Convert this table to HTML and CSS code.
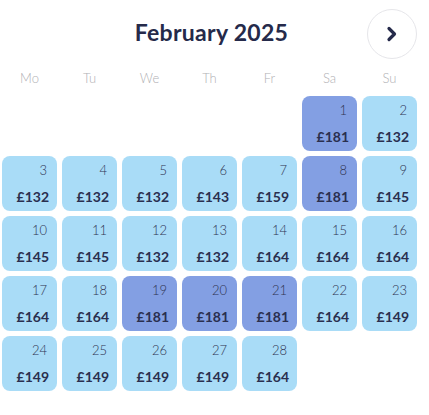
FILE: index.html
```html
<!DOCTYPE html>
<html lang="en">
<head>
<meta charset="utf-8">
<title>February 2025</title>
<link rel="stylesheet" href="styles.css">
</head>
<body>
<div class="cal">
  <div class="head">
    <span></span>
    <h1 class="title">February 2025</h1>
    <button class="next" aria-label="Next month">
      <svg width="12" height="16" viewBox="0 0 12 16"><path d="M3 2.5 L8.5 8 L3 13.5" fill="none" stroke="#252a4a" stroke-width="3.2" stroke-linecap="round" stroke-linejoin="round"/></svg>
    </button>
  </div>
  <div class="days">
    <span>Mo</span><span>Tu</span><span>We</span><span>Th</span><span>Fr</span><span>Sa</span><span>Su</span>
  </div>
  <div class="grid">
    <div class="empty"></div><div class="empty"></div><div class="empty"></div><div class="empty"></div><div class="empty"></div>
    <div class="cell hi"><span class="d">1</span><span class="p">£181</span></div>
    <div class="cell"><span class="d">2</span><span class="p">£132</span></div>
    <div class="cell"><span class="d">3</span><span class="p">£132</span></div>
    <div class="cell"><span class="d">4</span><span class="p">£132</span></div>
    <div class="cell"><span class="d">5</span><span class="p">£132</span></div>
    <div class="cell"><span class="d">6</span><span class="p">£143</span></div>
    <div class="cell"><span class="d">7</span><span class="p">£159</span></div>
    <div class="cell hi"><span class="d">8</span><span class="p">£181</span></div>
    <div class="cell"><span class="d">9</span><span class="p">£145</span></div>
    <div class="cell"><span class="d">10</span><span class="p">£145</span></div>
    <div class="cell"><span class="d">11</span><span class="p">£145</span></div>
    <div class="cell"><span class="d">12</span><span class="p">£132</span></div>
    <div class="cell"><span class="d">13</span><span class="p">£132</span></div>
    <div class="cell"><span class="d">14</span><span class="p">£164</span></div>
    <div class="cell"><span class="d">15</span><span class="p">£164</span></div>
    <div class="cell"><span class="d">16</span><span class="p">£164</span></div>
    <div class="cell"><span class="d">17</span><span class="p">£164</span></div>
    <div class="cell"><span class="d">18</span><span class="p">£164</span></div>
    <div class="cell hi"><span class="d">19</span><span class="p">£181</span></div>
    <div class="cell hi"><span class="d">20</span><span class="p">£181</span></div>
    <div class="cell hi"><span class="d">21</span><span class="p">£181</span></div>
    <div class="cell"><span class="d">22</span><span class="p">£164</span></div>
    <div class="cell"><span class="d">23</span><span class="p">£149</span></div>
    <div class="cell"><span class="d">24</span><span class="p">£149</span></div>
    <div class="cell"><span class="d">25</span><span class="p">£149</span></div>
    <div class="cell"><span class="d">26</span><span class="p">£149</span></div>
    <div class="cell"><span class="d">27</span><span class="p">£149</span></div>
    <div class="cell"><span class="d">28</span><span class="p">£164</span></div>
  </div>
</div>
</body>
</html>
```
FILE: styles.css
```css
* { box-sizing: border-box; }
html, body { margin: 0; padding: 0; background: #fff; }
body { font-family: Lato, "Noto Sans", sans-serif; color: #252a4a; }
.cal { width: 419px; margin-left: 2px; }
.head {
  display: grid;
  grid-template-columns: 1fr auto 1fr;
  align-items: center;
  padding-top: 9px;
  height: 59px;
}
.title {
  margin: 0;
  font-size: 23px;
  font-weight: 700;
  letter-spacing: 0.3px;
  color: #252a4a;
  line-height: 1;
  padding-bottom: 4px;
}
.next {
  justify-self: end;
  margin-right: 4px;
  width: 50px;
  height: 50px;
  border-radius: 50%;
  border: 1px solid #e6e6ea;
  background: #fff;
  display: flex;
  align-items: center;
  justify-content: center;
  padding: 0;
}
.days {
  display: grid;
  grid-template-columns: repeat(7, 55px);
  column-gap: 5px;
  margin-top: 10px;
  height: 27px;
}
.days span {
  text-align: center;
  font-size: 13px;
  font-weight: 300;
  color: #b0b0b4;
  line-height: 18px;
}
.grid {
  display: grid;
  grid-template-columns: repeat(7, 55px);
  grid-auto-rows: 55px;
  gap: 5px;
}
.cell {
  background: #a9dcf7;
  border-radius: 8px;
  display: flex;
  flex-direction: column;
  align-items: flex-end;
  justify-content: space-between;
  padding: 6px 8px 5px 0;
}
.cell.hi { background: #839fe3; }
.d {
  font-size: 13px;
  font-weight: 300;
  line-height: 16px;
  margin-right: 2px;
  color: #2f3452;
}
.p {
  font-size: 14px;
  font-weight: 700;
  line-height: 18px;
  color: #2a2f4f;
}
```
